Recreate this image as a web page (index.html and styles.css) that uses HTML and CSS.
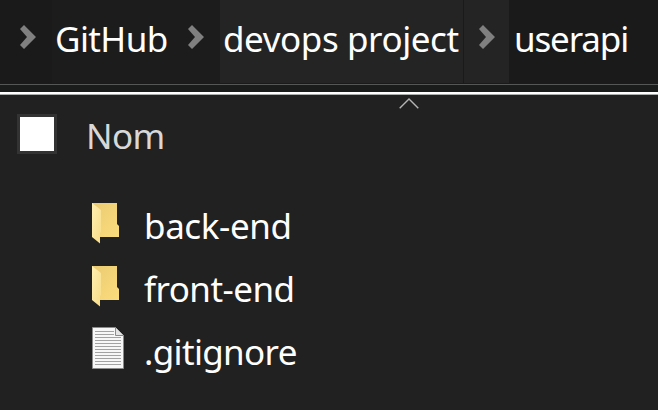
FILE: index.html
```html
<!DOCTYPE html>
<html lang="fr">
<head>
<meta charset="utf-8">
<title>userapi</title>
<link rel="stylesheet" href="styles.css">
</head>
<body>
<nav class="path">
  <span class="crumb-arrow first"><svg class="chevron" viewBox="0 0 16 24"><path d="M4 0L16 12L4 24L0 20L7 12L0 4Z"/></svg></span>
  <span class="crumb github"><span class="t-github">GitHub</span></span>
  <span class="crumb-arrow second"><svg class="chevron" viewBox="0 0 16 24"><path d="M4 0L16 12L4 24L0 20L7 12L0 4Z"/></svg></span>
  <span class="crumb project hot"><span class="t-project">devops project</span></span>
  <span class="crumb-arrow third hot"><svg class="chevron" viewBox="0 0 16 24"><path d="M4 0L16 12L4 24L0 20L7 12L0 4Z"/></svg></span>
  <span class="crumb current"><span class="t-current">userapi</span></span>
</nav>
<div class="rule"></div>
<main class="files">
  <svg class="sort" viewBox="0 0 20 11"><path d="M.7 10.3L10 1L19.300 10.300"/></svg>
  <header class="columns">
    <span class="checkbox"></span>
    <span class="t-name">Nom</span>
  </header>
  <ul class="list">
    <li class="row">
      <svg class="icon" viewBox="0 0 32 42"><defs><linearGradient id="back" x2="1" y2="1"><stop stop-color="#ebcb72"/><stop offset="1" stop-color="#fbdc7c"/></linearGradient><linearGradient id="flap" x2="1" y2="1"><stop stop-color="#ffefb0"/><stop offset="1" stop-color="#f8dc87"/></linearGradient></defs><path fill="url(#back)" d="M0 0H25V21L27 23V34H0Z"/><path fill="url(#flap)" d="M0 0L9 7V29L8 30V40.500L0 34Z"/></svg>
      <span class="t-back">back-end</span>
    </li>
    <li class="row">
      <svg class="icon" viewBox="0 0 32 42"><path fill="url(#back)" d="M0 0H25V21L27 23V34H0Z"/><path fill="url(#flap)" d="M0 0L9 7V29L8 30V40.500L0 34Z"/></svg>
      <span class="t-front">front-end</span>
    </li>
    <li class="row">
      <svg class="icon file" viewBox="0 0 32 42"><path fill="#f7f7f7" stroke="#8b8b8b" d="M.5 .5H23.500L31.500 8.500V41.500H.5Z"/><path fill="#e4e4e4" stroke="#8b8b8b" d="M23.500 .5V8.500H31.500"/><path stroke="#a2a2a2" d="M3 4.500H22M3 7.500H22M3 10.500H29M3 13.500H29M3 16.500H29M3 19.500H29M3 22.500H29M3 25.500H29M3 28.500H29M3 31.500H29M3 34.500H29M3 37.500H29"/></svg>
      <span class="t-ignore">.gitignore</span>
    </li>
  </ul>
</main>
</body>
</html>
```
FILE: styles.css
```css
* { box-sizing: border-box; }
body {
  margin: 0;
  width: 658px;
  height: 410px;
  overflow: hidden;
  background: #212121;
  color: #fff;
  font: 35px/48px "Segoe UI", "Noto Sans", sans-serif;
  white-space: nowrap;
}
.path {
  display: flex;
  height: 85px;
  background: #1a1a1a;
  border-bottom: 1px solid #555756;
}
.crumb, .crumb-arrow { height: 83px; flex: none; }
.crumb { padding-top: 15px; }
.crumb-arrow { padding-top: 25px; }
.first { width: 52px; padding-left: 20px; }
.github { width: 120px; padding-left: 3px; background: #1c1c1c; }
.second { width: 48px; padding-left: 16px; background: #1c1c1c; }
.project { width: 243px; padding-left: 3px; }
.third { width: 45px; margin-left: 1px; padding-left: 15px; }
.current { width: 149px; padding-left: 5px; }
.hot { background: #242424; }
.chevron { display: block; width: 16px; height: 24px; fill: #808080; }
.t-github { letter-spacing: -.6px; }
.t-project { letter-spacing: -.42px; }
.t-current { letter-spacing: -1.15px; }
.t-name { letter-spacing: -.7px; }
.t-back { letter-spacing: -.4px; }
.t-front { letter-spacing: -.55px; }
.t-ignore { letter-spacing: -.67px; }
.rule {
  height: 10px;
  background: #fff;
  border-top: 7px solid #1a1c1b;
  border-bottom: 1px solid #a9adab;
}
.files { padding-top: 3px; }
.sort {
  display: block;
  width: 20px;
  height: 11px;
  margin-left: 398.5px;
  fill: none;
  stroke: #b4b4b4;
  stroke-width: 1.4;
}
.columns {
  display: flex;
  align-items: center;
  gap: 29px;
  height: 48px;
  margin-top: 3px;
  padding-left: 17px;
  color: #d8d8d8;
}
.checkbox { width: 40px; height: 40px; margin-top: -5px; background: #fff; border: 3px solid #333; }
.list { margin: 34px 0 0; padding: 0; list-style: none; }
.row { display: flex; align-items: center; gap: 20px; height: 63px; padding-left: 92px; }
.icon { flex: none; width: 32px; height: 42px; margin-bottom: 4px; fill: none; }
.file { margin-bottom: 8px; }
```
